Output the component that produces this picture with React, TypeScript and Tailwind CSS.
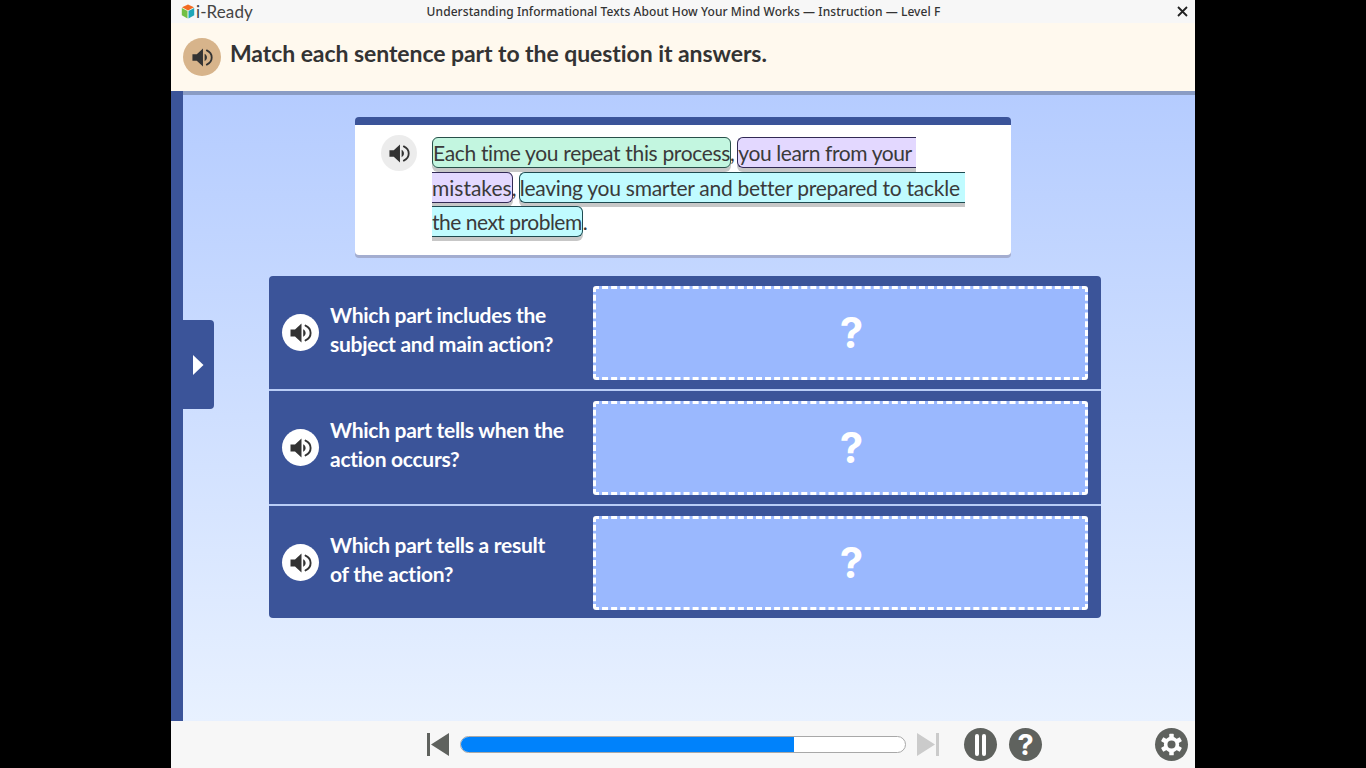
import React from "react";

function Speaker({ size, color }: { size: number; color: string }) {
  return (
    <svg width={size} height={size} viewBox="0 0 24 24" fill="none">
      <path d="M1.5 8.5H6L12.5 2.5V21.5L6 15.5H1.5Z" fill={color} />
      <path d="M14.2 8.2C16 9.2 16.6 10.5 16.6 12C16.6 13.5 16 14.8 14.2 15.8Z" fill={color} />
      <path d="M16.5 4.6C20 6.2 21.6 8.8 21.6 12C21.6 15.2 20 17.8 16.5 19.4" stroke={color} strokeWidth="1.9" strokeLinecap="round" />
    </svg>
  );
}

function Logo() {
  return (
    <svg width="14" height="15" viewBox="0 0 14 15" className="shrink-0">
      <path d="M7 0.5L13 3.3L7 6.4L1 3.3Z" fill="#f26b21" />
      <path d="M0.8 4L6.5 7V14.4L0.8 11.3Z" fill="#72bf44" />
      <path d="M13.2 4L7.5 7V14.4L13.2 11.3Z" fill="#1fa7b8" />
    </svg>
  );
}

function Row({ a, b, last }: { a: string; b: string; last?: boolean }) {
  return (
    <div className={`flex items-start pl-[13px] ${last ? "h-[112px]" : "h-[115px] border-b-2 border-[#b9cdf6]"}`}>
      <div className="mt-[38px] w-[37px] h-[37px] rounded-full bg-white flex items-center justify-center shrink-0">
        <Speaker size={24} color="#333333" />
      </div>
      <div className="ml-[11px] mt-[24px] w-[263px] shrink-0 text-white text-[21px] leading-[29px] font-bold font-['Lato','Noto_Sans',sans-serif] tracking-[-0.27px]">
        <div>{a}</div>
        <div>{b}</div>
      </div>
      <div className="mt-[10px] w-[495px] h-[94px] border-[3px] border-dashed border-white rounded-[3px] bg-[#9ab8fe] flex items-center justify-center pl-[22px]">
        <span className="text-white text-[42px] leading-none font-bold font-['Inter',sans-serif]">?</span>
      </div>
    </div>
  );
}

export default function App() {
  const hl = "border rounded-[6px] py-[2px] [box-shadow:0_4px_0_rgba(0,0,0,0.22)]";
  const comma = "-ml-[1px] tracking-[-1.5px]";
  return (
    <div className="w-[1366px] h-[768px] bg-black overflow-hidden flex justify-center font-['Noto_Sans',sans-serif]">
      <div className="w-[1024px] h-[768px] flex flex-col bg-white">
        <div className="h-[23px] bg-[#f7f7f7] flex items-center pl-[10px] pr-[7px] shrink-0">
          <Logo />
          <span className="ml-[1px] w-[62px] text-[17px] text-[#444] tracking-[0.1px] font-['Lato',sans-serif] leading-none">i-Ready</span>
          <span className="flex-1 text-center text-[12px] text-[#333] pr-[68px] tracking-[0.07px] font-medium whitespace-nowrap">
            Understanding Informational Texts About How Your Mind Works — Instruction — Level F
          </span>
          <svg width="11" height="11" viewBox="0 0 11 11">
            <path d="M1 1L10 10M10 1L1 10" stroke="#222" strokeWidth="1.8" />
          </svg>
        </div>
        <div className="h-[72px] bg-[#fff9ee] border-b-4 border-[#8a9cc4] flex items-start pl-[12px] pt-[15px] shrink-0">
          <div className="w-[38px] h-[38px] rounded-full bg-[#d7b48b] flex items-center justify-center">
            <Speaker size={23} color="#333333" />
          </div>
          <div className="ml-[9px] text-[23px] leading-[30px] font-bold text-[#333] font-['Lato',sans-serif] tracking-[-0.07px]">
            Match each sentence part to the question it answers.
          </div>
        </div>
        <div className="flex-1 relative flex bg-gradient-to-b from-[#b5ccff] to-[#e8f1ff]">
          <div className="w-[12px] -mt-[4px] relative bg-[#3b5499] shrink-0" />
          <div className="absolute left-[12px] top-[225px] w-[31px] h-[89px] bg-[#3b5499] rounded-r-[4px] flex items-center justify-center">
            <svg width="12" height="22" viewBox="0 0 12 22" className="ml-[-1px]">
              <path d="M1 1L11.5 11L1 21Z" fill="#fff" />
            </svg>
          </div>
          <div className="flex-1 flex flex-col items-start">
            <div className="ml-[172px] mt-[22px] w-[656px] h-[138px] bg-white rounded-[4px] border-t-[8px] border-[#3b5499] [box-shadow:0_3px_0_#a3add0] flex shrink-0">
              <div className="ml-[26px] mt-[10px] w-[36px] h-[36px] rounded-full bg-[#ececec] flex items-center justify-center shrink-0">
                <Speaker size={23} color="#333333" />
              </div>
              <div className="ml-[15px] mt-[11px] w-[560px] text-[21px] leading-[34.5px] text-[#3a3a3a] font-['Lato',sans-serif] tracking-[-0.3px]">
                <span className={`${hl} bg-[#c3f6e0] border-[#29504a] tracking-[-0.33px]`}>Each time you repeat this process</span>
                <span className={comma}>,{" "}</span>
                <span className={`${hl} bg-[#e3d8ff] border-[#322a55]`}>
                  <span className="tracking-[-0.4px]">you learn from your{"\u00a0"}</span>
                  <br />
                  <span className="tracking-[0px]">mistakes</span>
                </span>
                <span className={comma}>,{" "}</span>
                <span className={`${hl} bg-[#c0fbff] border-[#1f4a50]`}>
                  <span className="tracking-[-0.26px]">leaving you smarter and better prepared to tackle{"\u00a0"}</span>
                  <br />
                  <span className="tracking-[-0.5px]">the next problem</span>
                </span>
                .
              </div>
            </div>
            <div className="ml-[86px] mt-[21px] w-[832px] bg-[#3b5499] rounded-[4px] overflow-hidden shrink-0">
              <Row a="Which part includes the" b="subject and main action?" />
              <Row a="Which part tells when the" b="action occurs?" />
              <Row a="Which part tells a result" b="of the action?" last />
            </div>
          </div>
        </div>
        <div className="h-[47px] bg-[#f7f7f7] flex items-center shrink-0 pl-[256px]">
          <svg width="22" height="23" viewBox="0 0 22 23">
            <path d="M0 0H3V23H0ZM22 0V23L4 11.5Z" fill="#5f625e" />
          </svg>
          <div className="ml-[11px] w-[446px] h-[17px] rounded-full border border-[#a8a8a8] bg-white overflow-hidden">
            <div className="h-full bg-[#0082fb]" style={{ width: "74.9%" }} />
          </div>
          <svg width="22" height="23" viewBox="0 0 22 23" className="ml-[11px]">
            <path d="M22 0H19V23H22ZM0 0V23L18 11.5Z" fill="#cbcbcb" />
          </svg>
          <div className="ml-[25px] w-[33px] h-[33px] rounded-full bg-[#5f625e] flex items-center justify-center gap-[3px]">
            <div className="w-[4px] h-[22px] rounded-[2px] bg-white" />
            <div className="w-[4px] h-[22px] rounded-[2px] bg-white" />
          </div>
          <div className="ml-[12px] w-[33px] h-[33px] rounded-full bg-[#5f625e] flex items-center justify-center text-white text-[29px] font-bold leading-none font-['Inter',sans-serif]">?</div>
          <div className="ml-[113px] w-[33px] h-[33px] rounded-full bg-[#5f625e] flex items-center justify-center">
            <svg width="27" height="27" viewBox="0 0 24 24">
              <g fill="#fff">
                <path fillRule="evenodd" d="M12 5.2A6.8 6.8 0 1 0 12 18.8A6.8 6.8 0 1 0 12 5.2ZM12 8.4A3.6 3.6 0 1 1 12 15.6A3.6 3.6 0 1 1 12 8.4Z" />
                <rect x="10" y="2.4" width="4" height="4" rx="0.6" />
                <rect x="10" y="17.6" width="4" height="4" rx="0.6" />
                <rect x="10" y="2.4" width="4" height="4" rx="0.6" transform="rotate(60 12 12)" />
                <rect x="10" y="2.4" width="4" height="4" rx="0.6" transform="rotate(120 12 12)" />
                <rect x="10" y="2.4" width="4" height="4" rx="0.6" transform="rotate(240 12 12)" />
                <rect x="10" y="2.4" width="4" height="4" rx="0.6" transform="rotate(300 12 12)" />
              </g>
            </svg>
          </div>
        </div>
      </div>
    </div>
  );
}
